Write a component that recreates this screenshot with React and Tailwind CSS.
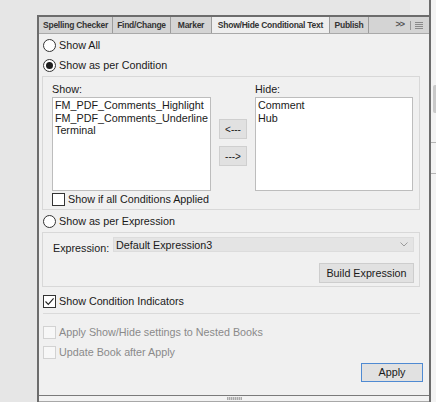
import React from 'react';

const ui = "font-['Liberation_Sans',Arial,sans-serif] text-[10.75px] text-[#1a1a1a]";

function Radio({ checked }) {
  return (
    <span className="w-[13px] h-[13px] rounded-full border border-[#333] bg-white flex items-center justify-center shrink-0">
      {checked && <span className="w-[7px] h-[7px] rounded-full bg-[#1e1e1e]" />}
    </span>
  );
}

function Check({ checked, disabled }) {
  return (
    <span
      className={
        'w-[13px] h-[13px] border flex items-center justify-center shrink-0 ' +
        (disabled ? 'border-[#d2d2d2] bg-[#f7f7f7]' : 'border-[#333] bg-white')
      }
    >
      {checked && (
        <svg width="11" height="11" viewBox="0 0 11 11">
          <polyline points="1.5,5.5 4.3,8.4 9.6,2.4" fill="none" stroke="#222" strokeWidth="1.1" />
        </svg>
      )}
    </span>
  );
}

function Tab({ label, w, active }) {
  return (
    <div
      className={
        'h-full flex items-center justify-center border-r border-[#9c9c9c] shrink-0 ' +
        (active ? 'bg-[#eeeeee]' : 'bg-[#d4d4d4]')
      }
      style={{ width: w }}
    >
      <span className="font-['Liberation_Sans',Arial,sans-serif] font-bold text-[8.5px] tracking-[-0.25px] text-[#333]">
        {label}
      </span>
    </div>
  );
}

function ListBox({ items }) {
  return (
    <div className="h-[94px] bg-white border border-[#bdbdbd] pt-[1px] pl-[2px]">
      {items.map((it) => (
        <div key={it} className="leading-[12.5px] whitespace-nowrap">{it}</div>
      ))}
    </div>
  );
}

export default function App() {
  const tabs = [
    { label: 'Spelling Checker', w: 74 },
    { label: 'Find/Change', w: 58 },
    { label: 'Marker', w: 41 },
    { label: 'Show/Hide Conditional Text', w: 118, active: true },
    { label: 'Publish', w: 39 },
  ];

  return (
    <div className={'w-[436px] h-[402px] bg-[#e6e6e6] flex overflow-hidden ' + ui}>
      {/* left: gutter + panel */}
      <div className="w-[429px] flex flex-col">
        <div className="h-[15px] flex shrink-0">
          <div className="w-[410px]" />
          <div className="flex-1 bg-[#ebebeb]" />
        </div>
        <div className="flex flex-1">
          <div className="w-[37px] shrink-0" />
          <div className="flex-1 flex flex-col border-l-2 border-t-2 border-[#6c6c6c] bg-[#f0f0f0]">
            {/* tab bar */}
            <div className="h-[17px] flex bg-[#d4d4d4] border-b border-[#a9a9a9] shrink-0">
              {tabs.map((t) => (
                <Tab key={t.label} {...t} />
              ))}
              <div className="flex-1 flex items-center justify-end pr-[6px]">
                <span className="text-[9px] font-bold text-[#555] tracking-[-1px] mr-[6px]">&gt;&gt;</span>
                <span className="w-px h-[9px] bg-[#999] mr-[4px]" />
                <span className="w-[8px] h-[7px] flex flex-col justify-between">
                  <span className="h-[1px] bg-[#8a8a8a]" />
                  <span className="h-[1px] bg-[#8a8a8a]" />
                  <span className="h-[1px] bg-[#8a8a8a]" />
                  <span className="h-[1px] bg-[#8a8a8a]" />
                </span>
              </div>
            </div>

            {/* content */}
            <div className="h-[361px] flex flex-col">
              <div className="mt-[5px] ml-[4px] h-[13px] flex items-center gap-[3px]">
                <Radio />
                <span>Show All</span>
              </div>
              <div className="mt-[7px] ml-[4px] h-[13px] flex items-center gap-[3px]">
                <Radio checked />
                <span>Show as per Condition</span>
              </div>

              {/* condition group */}
              <div className="mt-[4px] ml-[3px] w-[378px] h-[134px] border border-[#d8d8d8] pt-[6px] pl-[9px] pr-[5px] pb-[3px] flex flex-col">
                <div className="flex">
                  <div className="w-[159px] flex flex-col">
                    <div className="h-[12px] leading-[12px]">Show:</div>
                    <div className="mt-[2px]">
                      <ListBox items={['FM_PDF_Comments_Highlight', 'FM_PDF_Comments_Underline', 'Terminal']} />
                    </div>
                  </div>
                  <div className="w-[28px] mx-[8px] flex flex-col pt-[36px] gap-[7px]">
                    <div className="h-[20px] bg-[#e1e1e1] border border-[#cfcfcf] flex items-center justify-center text-[10px]">&lt;---</div>
                    <div className="h-[20px] bg-[#e1e1e1] border border-[#cfcfcf] flex items-center justify-center text-[10px]">---&gt;</div>
                  </div>
                  <div className="w-[158px] flex flex-col">
                    <div className="h-[12px] leading-[12px]">Hide:</div>
                    <div className="mt-[2px]">
                      <ListBox items={['Comment', 'Hub']} />
                    </div>
                  </div>
                </div>
                <div className="mt-[2px] h-[13px] flex items-center gap-[3px]">
                  <Check />
                  <span>Show if all Conditions Applied</span>
                </div>
              </div>

              <div className="mt-[5px] ml-[4px] h-[13px] flex items-center gap-[3px]">
                <Radio />
                <span>Show as per Expression</span>
              </div>

              {/* expression group */}
              <div className="mt-[4px] ml-[3px] w-[378px] h-[55px] border border-[#d8d8d8] pt-[4px] pl-[10px] pr-[5px] flex flex-col">
                <div className="h-[15px] flex">
                  <span className="w-[60px] pt-[5px] leading-[12px]">Expression:</span>
                  <div className="flex-1 bg-[#e4e4e4] border border-[#dcdcdc] flex items-center pl-[2px] pr-[5px]">
                    <span className="flex-1 leading-[12px]">Default Expression3</span>
                    <svg width="8" height="5" viewBox="0 0 8 5">
                      <polyline points="0.5,0.5 4,4 7.5,0.5" fill="none" stroke="#9a9a9a" strokeWidth="1" />
                    </svg>
                  </div>
                </div>
                <div className="mt-[11px] flex justify-end">
                  <div className="w-[95px] h-[20px] bg-[#e1e1e1] border border-[#cdcdcd] flex items-center justify-center">
                    Build Expression
                  </div>
                </div>
              </div>

              <div className="mt-[8px] ml-[4px] h-[13px] flex items-center gap-[3px]">
                <Check checked />
                <span>Show Condition Indicators</span>
              </div>

              <div className="mt-[5px] ml-[4px] mr-[9px] h-px bg-[#dadada]" />

              <div className="mt-[12px] ml-[4px] h-[12px] flex items-center gap-[3px] text-[#8a8a8a]">
                <Check disabled />
                <span>Apply Show/Hide settings to Nested Books</span>
              </div>
              <div className="mt-[8px] ml-[4px] h-[12px] flex items-center gap-[3px] text-[#8a8a8a]">
                <Check disabled />
                <span>Update Book after Apply</span>
              </div>

              <div className="mt-[5px] mr-[6px] flex justify-end">
                <div className="w-[62px] h-[19px] bg-[#e1e1e1] border border-[#4f8ad2] flex items-center justify-center">
                  Apply
                </div>
              </div>
            </div>

            {/* bottom grip strip */}
            <div className="h-px bg-[#7a7a7a]" />
            <div className="h-[6px] bg-[#f2f2f2] border-b border-[#a8a8a8] flex justify-center pt-[1px]">
              <div className="w-[15px] h-[3px] bg-[repeating-linear-gradient(90deg,#a9a9a9_0_1px,#d0d0d0_1px_2px)]" />
            </div>
          </div>
        </div>
      </div>

      {/* right strip */}
      <div className="w-[7px] border-l-2 border-[#6c6c6c] bg-[#f3f3f3] flex flex-col">
        <div className="h-[85px]" />
        <div className="ml-[2px] h-[28px] bg-[#c9c9c9] rounded-l-[2px]" />
        <div className="h-[29px]" />
        <div className="h-px bg-[#b5b5b5]" />
        <div className="h-[30px]" />
        <div className="h-px bg-[#b5b5b5]" />
      </div>
    </div>
  );
}
